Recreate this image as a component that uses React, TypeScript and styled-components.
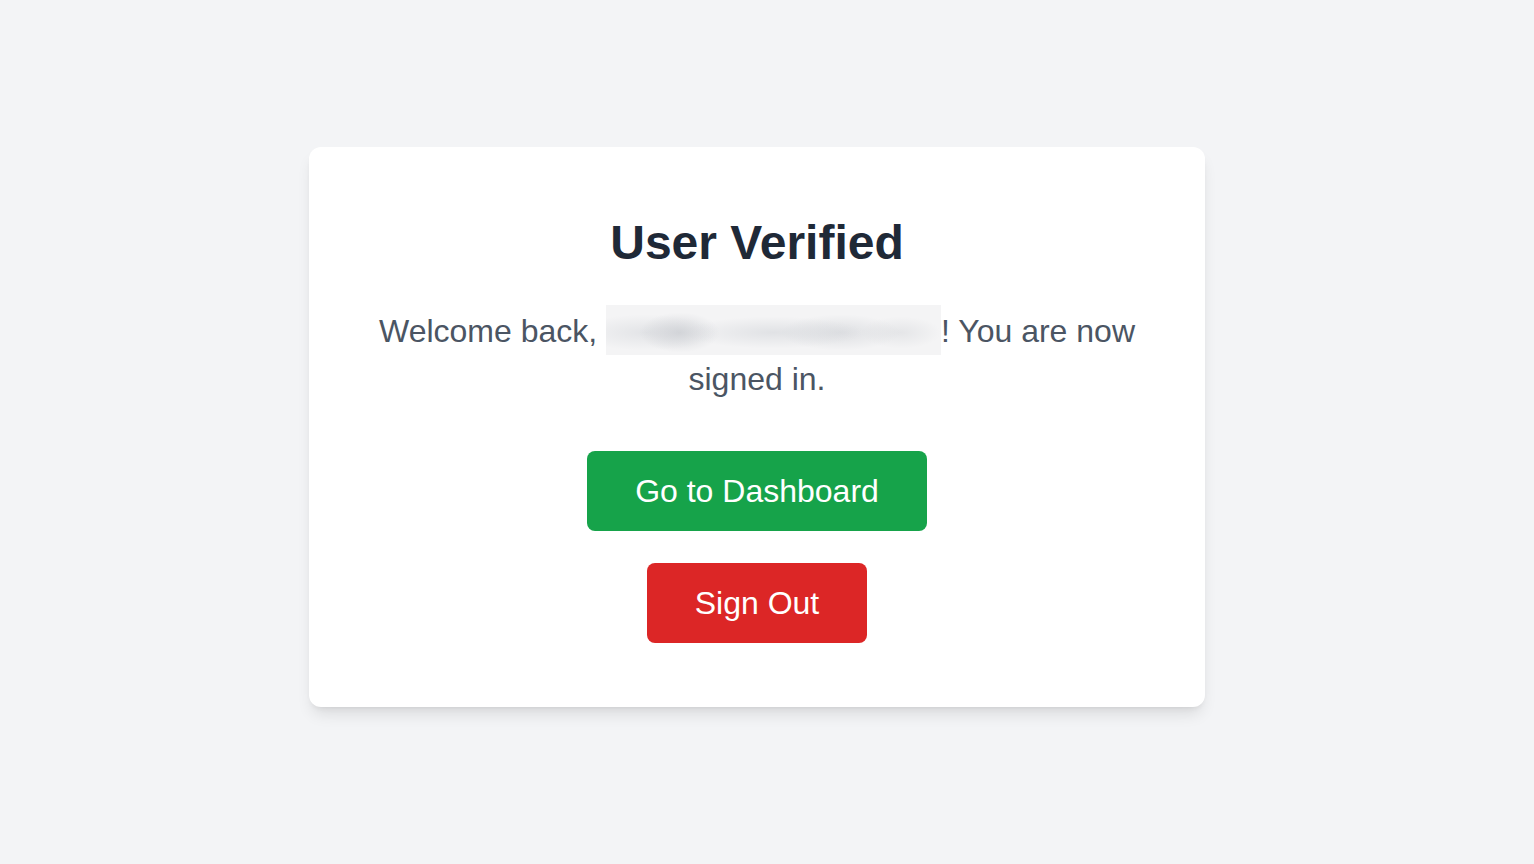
import styled, { createGlobalStyle } from "styled-components";

const GlobalStyle = createGlobalStyle`
  html, body {
    margin: 0;
    padding: 0;
    background-color: #f3f4f6;
    font-family: "Liberation Sans", Arial, sans-serif;
  }
`;

const App = () => {
  return (
    <Page>
      <GlobalStyle />
      <Card>
        <Title>User Verified</Title>
        <Message>
          Welcome back, <Redacted aria-label="hidden email" />! You are now
          signed in.
        </Message>
        <Actions>
          <ActionButton $variant="success">Go to Dashboard</ActionButton>
          <ActionButton $variant="danger">Sign Out</ActionButton>
        </Actions>
      </Card>
    </Page>
  );
};

const Page = styled.div`
  display: flex;
  align-items: center;
  justify-content: center;
  min-height: 864px;
  box-sizing: border-box;
  padding: 0 20px 10px 0;
`;

const Card = styled.div`
  width: 896px;
  box-sizing: border-box;
  padding: 64px;
  background-color: #ffffff;
  border-radius: 12px;
  box-shadow: 0 10px 15px -3px rgba(0, 0, 0, 0.1),
    0 4px 6px -4px rgba(0, 0, 0, 0.1);
  text-align: center;
`;

const Title = styled.h1`
  margin: 0 0 32px;
  font-size: 48px;
  line-height: 64px;
  font-weight: 700;
  color: #1f2937;
`;

const Message = styled.p`
  margin: 0 0 48px;
  font-size: 32px;
  line-height: 48px;
  color: #4b5563;
`;

// blurred-out e-mail address
const Redacted = styled.span`
  display: inline-block;
  vertical-align: top;
  margin: -2px 0 0;
  width: 335px;
  height: 50px;
  background-color: #f4f4f5;
  background-image: radial-gradient(
      ellipse 40px 20px at 22% 55%,
      rgba(190, 193, 199, 0.55),
      rgba(190, 193, 199, 0) 100%
    ),
    radial-gradient(
      ellipse 70px 18px at 12% 55%,
      rgba(205, 208, 213, 0.45),
      rgba(205, 208, 213, 0) 100%
    ),
    radial-gradient(
      ellipse 90px 16px at 50% 55%,
      rgba(205, 208, 213, 0.5),
      rgba(205, 208, 213, 0) 100%
    ),
    radial-gradient(
      ellipse 60px 18px at 70% 55%,
      rgba(200, 203, 208, 0.5),
      rgba(200, 203, 208, 0) 100%
    ),
    radial-gradient(
      ellipse 40px 16px at 88% 55%,
      rgba(210, 212, 216, 0.45),
      rgba(210, 212, 216, 0) 100%
    );
`;

const Actions = styled.div`
  display: flex;
  flex-direction: column;
  align-items: center;
  gap: 32px;
`;

const ActionButton = styled.button<{ $variant: "success" | "danger" }>`
  padding: 16px 48px;
  border: none;
  border-radius: 8px;
  font-family: "Liberation Sans", Arial, sans-serif;
  font-size: 32px;
  line-height: 48px;
  color: #ffffff;
  cursor: pointer;
  background-color: ${({ $variant }) =>
    $variant === "success" ? "#16a34a" : "#dc2626"};
`;

export default App;
